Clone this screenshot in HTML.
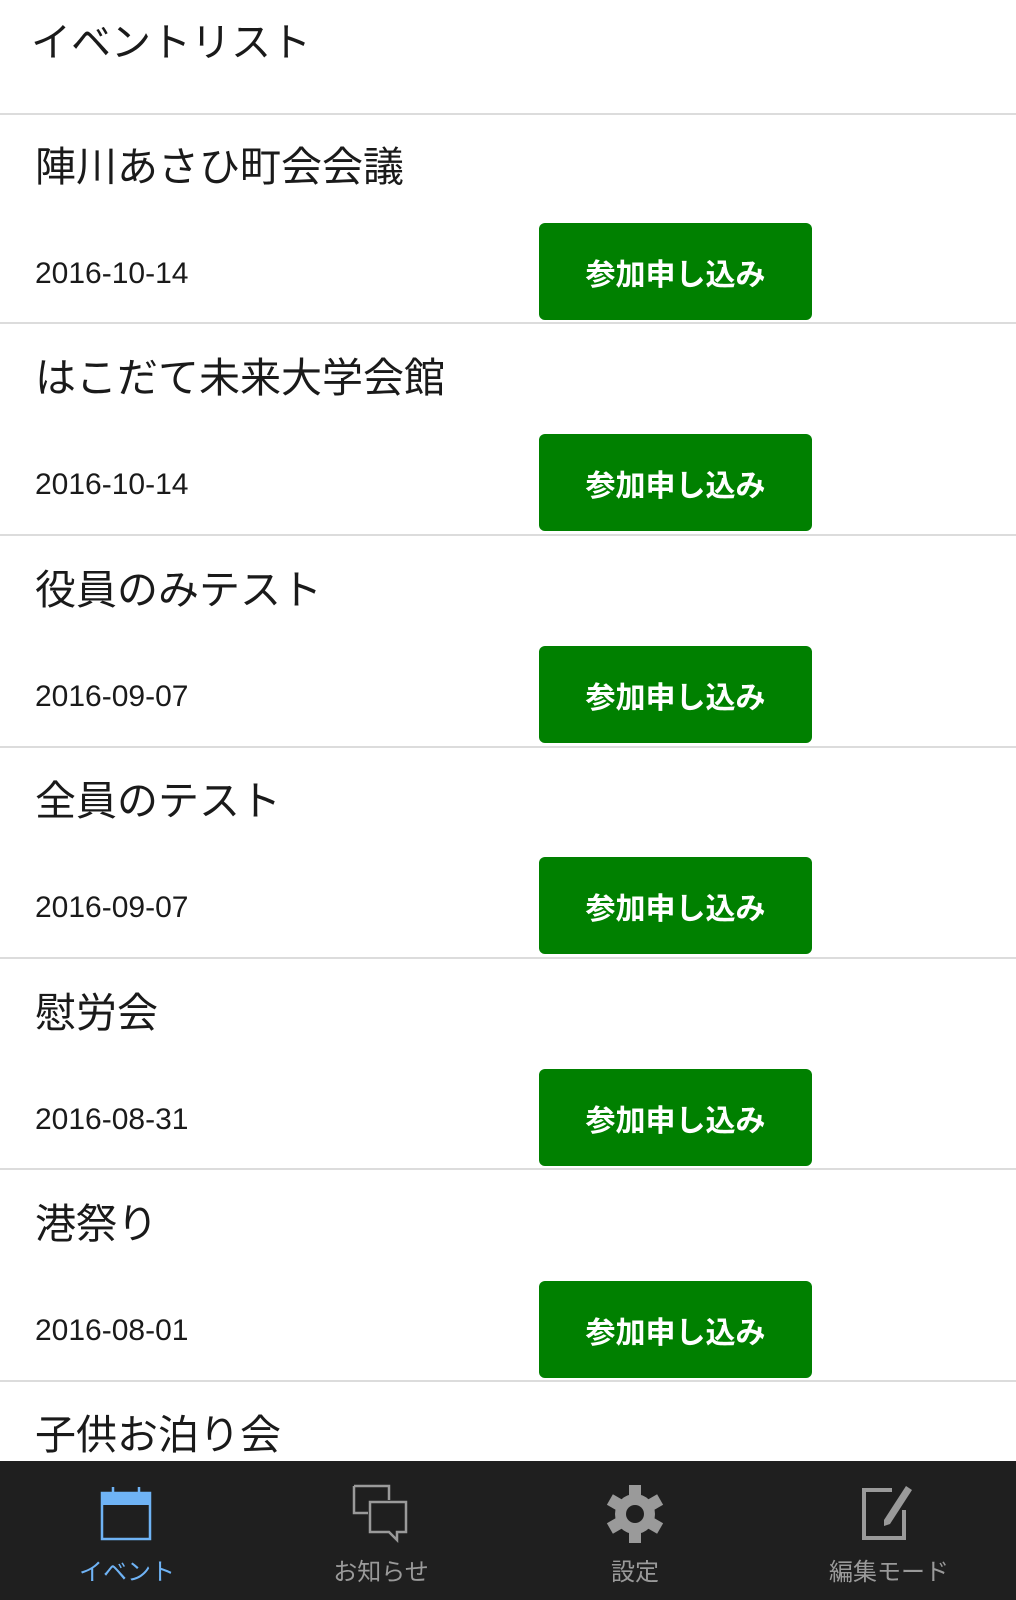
<!DOCTYPE html>
<html><head><meta charset="utf-8"><style>
*{margin:0;padding:0;box-sizing:border-box}
body{width:1016px;height:1600px;overflow:hidden;background:#fff;font-family:"Liberation Sans","Noto Sans CJK JP",sans-serif;color:#1a1a1a;position:relative}
.hdr{position:absolute;left:31px;top:19px;font-size:40px;line-height:48px}
.line{position:absolute;left:0;width:1016px;height:2px;background:#dcdcdc}
.t{position:absolute;left:35px;font-size:41px;line-height:48px;margin-top:3px}
.d{position:absolute;left:35px;font-size:30px;line-height:34px;margin-top:2px}
.b{position:absolute;left:539px;width:273px;height:97px;background:#008000;border-radius:6px;color:#fff;font-weight:bold;font-size:30px;display:flex;align-items:center;justify-content:center}
.bar{position:absolute;left:0;top:1461px;width:1016px;height:139px;background:#1f1f1f}
.lb{position:absolute;top:1558px;width:254px;text-align:center;font-size:24px;line-height:30px;color:#9a9a9a}
svg{position:absolute}
</style></head><body>
<div class="hdr">イベントリスト</div>
<div class="line" style="top:113px"></div>

<div class="t" style="top:140px">陣川あさひ町会会議</div>
<div class="d" style="top:255px">2016-10-14</div>
<div class="b" style="top:223px">参加申し込み</div>
<div class="line" style="top:322px"></div>

<div class="t" style="top:351px">はこだて未来大学会館</div>
<div class="d" style="top:466px">2016-10-14</div>
<div class="b" style="top:434px">参加申し込み</div>
<div class="line" style="top:534px"></div>

<div class="t" style="top:563px">役員のみテスト</div>
<div class="d" style="top:678px">2016-09-07</div>
<div class="b" style="top:646px">参加申し込み</div>
<div class="line" style="top:746px"></div>

<div class="t" style="top:774px">全員のテスト</div>
<div class="d" style="top:889px">2016-09-07</div>
<div class="b" style="top:857px">参加申し込み</div>
<div class="line" style="top:957px"></div>

<div class="t" style="top:986px">慰労会</div>
<div class="d" style="top:1101px">2016-08-31</div>
<div class="b" style="top:1069px">参加申し込み</div>
<div class="line" style="top:1168px"></div>

<div class="t" style="top:1197px">港祭り</div>
<div class="d" style="top:1312px">2016-08-01</div>
<div class="b" style="top:1281px">参加申し込み</div>
<div class="line" style="top:1380px"></div>

<div class="t" style="top:1408px">子供お泊り会</div>

<div class="bar"></div>
<svg style="left:95px;top:1484px" width="62" height="58" viewBox="0 0 62 58">
<rect x="7" y="9" width="48" height="12" fill="#6fb3f5"/>
<rect x="7" y="9" width="48" height="46" fill="none" stroke="#6fb3f5" stroke-width="2.5"/>
<line x1="18" y1="3" x2="18" y2="15" stroke="#6fb3f5" stroke-width="2.5"/>
<line x1="44" y1="3" x2="44" y2="15" stroke="#6fb3f5" stroke-width="2.5"/>
</svg>
<div class="lb" style="left:0;color:#6fb3f5">イベント</div>

<svg style="left:350px;top:1482px" width="62" height="62" viewBox="0 0 62 62">
<path d="M4 4H39V18M18 31H4V4" fill="none" stroke="#9a9a9a" stroke-width="2.5"/>
<path d="M20 20H56V50H47L47 58L39 50H20Z" fill="none" stroke="#9a9a9a" stroke-width="2.5"/>
</svg>
<div class="lb" style="left:254px">お知らせ</div>

<svg style="left:605px;top:1484px" width="60" height="60" viewBox="-30 -30 60 60">
<g fill="#9a9a9a">
<circle r="20"/>
<g id="tt"><rect x="-6" y="-29" width="12" height="12"/></g>
<use href="#tt" transform="rotate(60)"/><use href="#tt" transform="rotate(120)"/><use href="#tt" transform="rotate(180)"/><use href="#tt" transform="rotate(240)"/><use href="#tt" transform="rotate(300)"/>
</g>
<circle r="9" fill="#1f1f1f"/>
</svg>
<div class="lb" style="left:508px">設定</div>

<svg style="left:860px;top:1484px" width="58" height="58" viewBox="0 0 58 58">
<path d="M32 6H4V54H44V26" fill="none" stroke="#9a9a9a" stroke-width="4"/>
<path d="M46 2L52 6L30 40L24 42L24 36Z" fill="#9a9a9a"/>
</svg>
<div class="lb" style="left:762px">編集モード</div>
</body></html>
